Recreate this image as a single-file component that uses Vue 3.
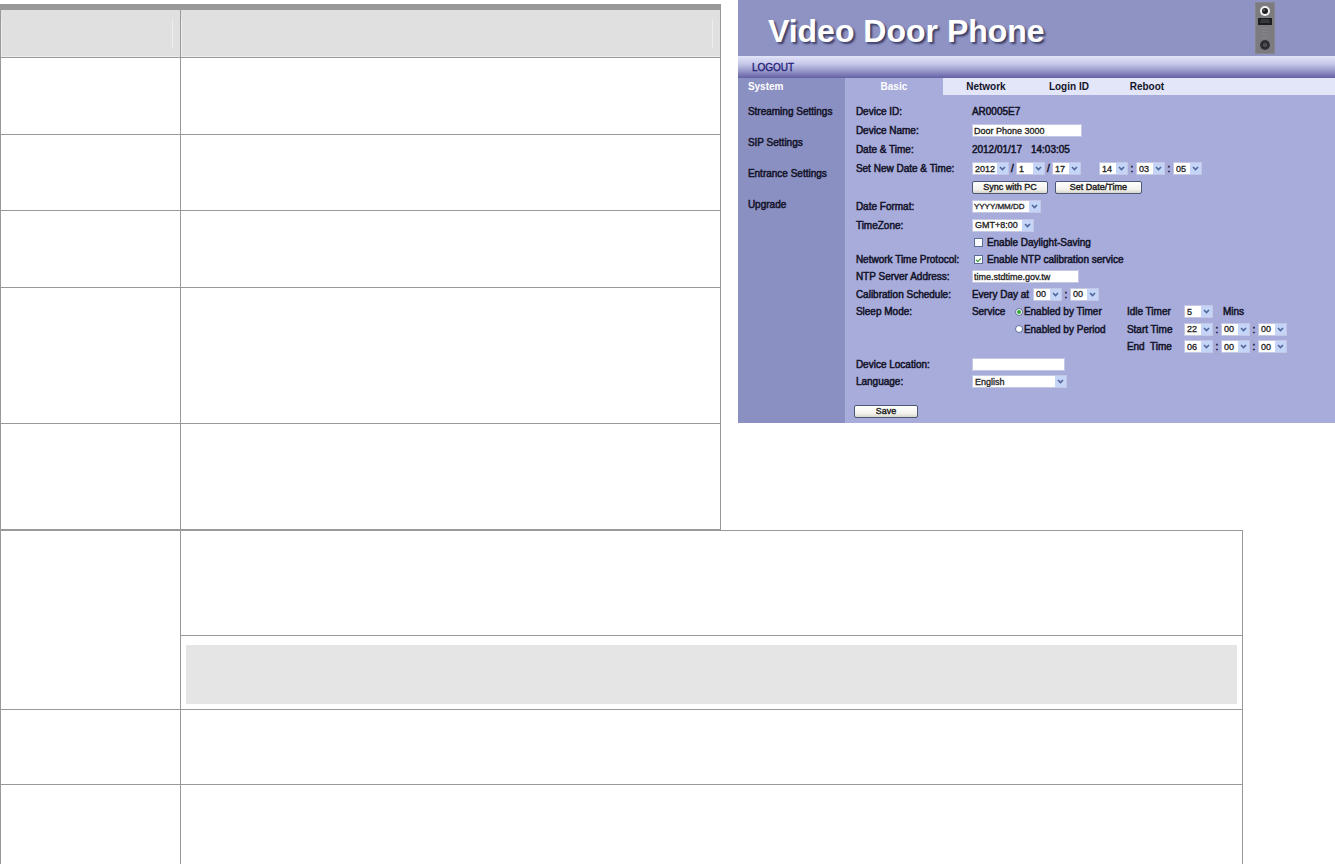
<script setup>
import {ref} from "vue";

const upperRows=[77,76,77,136,106]
const menu=['Streaming Settings','SIP Settings','Entrance Settings','Upgrade']
const tabs=ref([
  {name:'Basic',width:98},
  {name:'Network',width:86},
  {name:'Login ID',width:80},
  {name:'Reboot',width:76},
])
const activeTab=ref('Basic')
const newDate=ref([
  {label:'Year',value:'2012',wide:true,after:'/'},
  {label:'Month',value:'1',after:'/'},
  {label:'Day',value:'17',after:''},
])
const newTime=ref([
  {label:'Hour',value:'14',after:':'},
  {label:'Minute',value:'03',after:':'},
  {label:'Second',value:'05',after:''},
])
const periods=ref({
  start:['22','00','00'],
  end:['06','00','00'],
})
const deviceName=ref('Door Phone 3000')
const ntpServer=ref('time.stdtime.gov.tw')
const deviceLocation=ref('')
const daylight=ref(false)
const ntpEnabled=ref(true)
const sleepMode=ref('timer')
</script>

<template>
  <div class="page">
    <div class="top">
      <table class="grid upper">
        <thead>
          <tr>
            <th class="first"><div class="cellEdge"><div class="cellMark"></div></div></th>
            <th><div class="cellEdge"><div class="cellMark"></div></div></th>
          </tr>
        </thead>
        <tbody>
          <tr v-for="(h,index) in upperRows" :key="index" :style="{height:h+'px'}">
            <td class="first"></td>
            <td></td>
          </tr>
        </tbody>
      </table>

      <div class="phone">
        <header class="banner">
          <h1>Video Door Phone</h1>
          <svg class="device" width="20" height="52" viewBox="0 0 20 52">
            <rect x="0" y="0" width="20" height="52" fill="#85858a"/>
            <rect x="1" y="1" width="18" height="50" fill="#7c7c80"/>
            <circle cx="10" cy="9" r="5" fill="#f4f4f4"/>
            <circle cx="10" cy="9" r="3" fill="#222226"/>
            <circle cx="9" cy="8" r="1" fill="#66666c"/>
            <rect x="3" y="16" width="14" height="7" fill="#1d1e22"/>
            <path d="M6 18h8M5 20h10" stroke="#50525a" stroke-width="1"/>
            <path d="M8 26v12M10 26v12M12 26v12" stroke="#8f8f92" stroke-width="1" stroke-dasharray="1 2"/>
            <circle cx="10" cy="43" r="5" fill="#323338"/>
            <circle cx="10" cy="43" r="3" fill="#4b4c51" stroke="#222226"/>
          </svg>
        </header>
        <div class="logoutBar"><a href="#">LOGOUT</a></div>
        <div class="body">
          <nav class="side">
            <span class="sideTitle">System</span>
            <a v-for="item in menu" :key="item" href="#">{{item}}</a>
          </nav>
          <main class="main">
            <div class="tabs">
              <button v-for="tab in tabs" :key="tab.name" type="button"
                      :class="{active:activeTab===tab.name}"
                      :style="{width:tab.width+'px'}"
                      @click="activeTab=tab.name">{{tab.name}}</button>
            </div>
            <form class="form" @submit.prevent>
              <span>Device ID:</span>
              <div class="line">AR0005E7</div>

              <label for="deviceName">Device Name:</label>
              <div class="line"><input id="deviceName" v-model="deviceName" class="text nameBox" type="text"/></div>

              <span>Date &amp; Time:</span>
              <div class="line dateNow"><span>2012/01/17</span><span>14:03:05</span></div>

              <span>Set New Date &amp; Time:</span>
              <div class="line">
                <template v-for="part in newDate" :key="part.label">
                  <span class="pick" :class="{year:part.wide}">
                    <select v-model="part.value" :aria-label="part.label"><option>{{part.value}}</option></select>
                    <svg viewBox="0 0 11 11"><path d="M3 4l2.5 2.5L8 4" /></svg>
                  </span>
                  <span v-if="part.after" class="mark slash">{{part.after}}</span>
                </template>
                <span class="split"></span>
                <template v-for="part in newTime" :key="part.label">
                  <span class="pick">
                    <select v-model="part.value" :aria-label="part.label"><option>{{part.value}}</option></select>
                    <svg viewBox="0 0 11 11"><path d="M3 4l2.5 2.5L8 4" /></svg>
                  </span>
                  <span v-if="part.after" class="mark">{{part.after}}</span>
                </template>
              </div>

              <span></span>
              <div class="line buttons">
                <button type="button" class="btn sync">Sync with PC</button>
                <button type="button" class="btn set">Set Date/Time</button>
              </div>

              <label for="dateFormat">Date Format:</label>
              <div class="line">
                <span class="pick format">
                  <select id="dateFormat"><option>YYYY/MM/DD</option></select>
                  <svg viewBox="0 0 11 11"><path d="M3 4l2.5 2.5L8 4" /></svg>
                </span>
              </div>

              <label for="timeZone">TimeZone:</label>
              <div class="line">
                <span class="pick zone">
                  <select id="timeZone"><option>GMT+8:00</option></select>
                  <svg viewBox="0 0 11 11"><path d="M3 4l2.5 2.5L8 4" /></svg>
                </span>
              </div>

              <span></span>
              <label class="line check"><input v-model="daylight" type="checkbox"/>Enable Daylight-Saving</label>

              <span>Network Time Protocol:</span>
              <label class="line check"><input v-model="ntpEnabled" type="checkbox"/>Enable NTP calibration service</label>

              <label for="ntpServer">NTP Server Address:</label>
              <div class="line"><input id="ntpServer" v-model="ntpServer" class="text serverBox" type="text"/></div>

              <span>Calibration Schedule:</span>
              <div class="line">
                <span class="every">Every Day at</span>
                <span class="pick">
                  <select aria-label="Calibration hour"><option>00</option></select>
                  <svg viewBox="0 0 11 11"><path d="M3 4l2.5 2.5L8 4" /></svg>
                </span>
                <span class="mark">:</span>
                <span class="pick">
                  <select aria-label="Calibration minute"><option>00</option></select>
                  <svg viewBox="0 0 11 11"><path d="M3 4l2.5 2.5L8 4" /></svg>
                </span>
              </div>

              <span>Sleep Mode:</span>
              <div class="line sleep">
                <span>Service</span>
                <label class="radio"><input v-model="sleepMode" type="radio" name="sleep" value="timer"/>Enabled by Timer</label>
                <label for="idle">Idle Timer</label>
                <div class="line">
                  <span class="pick">
                    <select id="idle"><option>5</option></select>
                    <svg viewBox="0 0 11 11"><path d="M3 4l2.5 2.5L8 4" /></svg>
                  </span>
                  <span class="mins">Mins</span>
                </div>
              </div>

              <span></span>
              <div class="line sleep">
                <span></span>
                <label class="radio"><input v-model="sleepMode" type="radio" name="sleep" value="period"/>Enabled by Period</label>
                <span>Start Time</span>
                <div class="line">
                  <template v-for="(value,i) in periods.start" :key="i">
                    <span v-if="i>0" class="mark">:</span>
                    <span class="pick">
                      <select :aria-label="'Start time '+(i+1)"><option>{{value}}</option></select>
                      <svg viewBox="0 0 11 11"><path d="M3 4l2.5 2.5L8 4" /></svg>
                    </span>
                  </template>
                </div>
              </div>

              <span></span>
              <div class="line sleep">
                <span></span>
                <span></span>
                <span class="endTime">End&nbsp; Time</span>
                <div class="line">
                  <template v-for="(value,i) in periods.end" :key="i">
                    <span v-if="i>0" class="mark">:</span>
                    <span class="pick">
                      <select :aria-label="'End time '+(i+1)"><option>{{value}}</option></select>
                      <svg viewBox="0 0 11 11"><path d="M3 4l2.5 2.5L8 4" /></svg>
                    </span>
                  </template>
                </div>
              </div>

              <label for="location">Device Location:</label>
              <div class="line"><input id="location" v-model="deviceLocation" class="text locationBox" type="text"/></div>

              <label for="language">Language:</label>
              <div class="line">
                <span class="pick language">
                  <select id="language"><option>English</option></select>
                  <svg viewBox="0 0 11 11"><path d="M3 4l2.5 2.5L8 4" /></svg>
                </span>
              </div>
            </form>
            <button type="button" class="btn save">Save</button>
          </main>
        </div>
      </div>
    </div>

    <table class="grid lower">
      <tbody>
        <tr class="h105"><td class="first" rowspan="2"></td><td></td></tr>
        <tr><td class="noteCell"><div class="note"></div></td></tr>
        <tr class="h75"><td class="first"></td><td></td></tr>
        <tr class="h79"><td class="first last"></td><td class="last"></td></tr>
      </tbody>
    </table>
  </div>
</template>

<style>
body{
  margin: 0;
  background-color: white;
}
</style>

<style scoped>
.page{
  padding-top: 4px;
  font-family: "Liberation Sans", Arial, sans-serif;
}
.top{
  display: flex;
  align-items: flex-start;
}
.grid{
  border-collapse: separate;
  border-spacing: 0;
  table-layout: fixed;
}
.grid th,
.grid td{
  box-sizing: border-box;
  padding: 0;
  border-right: 1px solid #999999;
  border-bottom: 1px solid #999999;
  vertical-align: top;
}
.grid .first{
  width: 181px;
  border-left: 1px solid #999999;
}
.grid .last{
  border-bottom: none;
}
.upper{
  width: 54%;
  border-top: 6px solid #999999;
}
.upper th{
  background-color: #e0e0e0;
}
.cellEdge{
  margin-top: 9px;
  height: 37px;
  border-left: 1px solid #eeeeee;
  border-bottom: 1px solid #eeeeee;
}
.cellMark{
  height: 29px;
  margin-right: 7px;
  border-right: 1px solid #eeeeee;
}
.lower{
  width: 93.1%;
  border-top: 1px solid #999999;
}
.h105{
  height: 105px;
}
.h75{
  height: 75px;
}
.h79{
  height: 79px;
}
.grid .noteCell{
  padding: 9px 5px 5px;
}
.note{
  height: 59px;
  background-color: #e5e5e5;
}

.phone{
  flex: 1;
  margin-top: -4px;
  margin-left: 17px;
  font-size: 10px;
  font-weight: bold;
  color: #14142a;
  background-color: #a8acdb;
}
.banner{
  display: flex;
  justify-content: space-between;
  align-items: center;
  height: 56px;
  padding: 0 60px 0 30px;
  background-color: #8f93c4;
}
.banner h1{
  margin: 0;
  padding-top: 6px;
  font-size: 32px;
  line-height: 40px;
  color: white;
  text-shadow: 2px 2px 2px #3c3f66;
}
.logoutBar{
  height: 22px;
  padding-left: 14px;
  line-height: 24px;
  background: linear-gradient(#e2e4f8, #c6c8ea 35%, #9c9ccc 65%, #6460a4);
}
.logoutBar a{
  color: #241c78;
  font-weight: normal;
  text-decoration: none;
  -webkit-text-stroke: 0.3px #241c78;
}
.body{
  display: flex;
}
.side{
  display: flex;
  flex-direction: column;
  box-sizing: border-box;
  width: 107px;
  padding-left: 10px;
  background-color: #8b90c2;
}
.side a{
  height: 31px;
  line-height: 31px;
  font-weight: normal;
  color: #14142a;
  text-decoration: none;
  white-space: nowrap;
  -webkit-text-stroke: 0.5px;
}
.sideTitle{
  height: 18px;
  line-height: 18px;
  color: white;
}
.main{
  flex: 1;
  padding-bottom: 5px;
}
.tabs{
  display: flex;
  height: 17px;
  background-color: #e3e5f9;
}
.tabs button{
  padding: 0;
  border: none;
  background: none;
  font: bold 10px "Liberation Sans", Arial, sans-serif;
  color: #14142a;
}
.tabs .active{
  background-color: #a8acdb;
  color: white;
}
.form{
  display: grid;
  grid-template-columns: 116px 1fr;
  grid-template-rows: repeat(6, 19px) 18px 17px 17px 17px 18px 17px 18px 17px 18px 17px;
  align-items: center;
  padding: 7px 0 0 11px;
  font-weight: normal;
  white-space: nowrap;
  -webkit-text-stroke: 0.5px;
}
.line{
  display: flex;
  align-items: center;
}
.dateNow{
  gap: 9px;
}
.text{
  box-sizing: border-box;
  height: 13px;
  padding: 0 1px;
  border: 1px solid #c4c8e4;
  background-color: white;
  font: 9px "Liberation Sans", Arial, sans-serif;
  color: #222222;
  -webkit-text-stroke: 0.3px;
}
.nameBox{
  width: 110px;
}
.serverBox{
  width: 107px;
}
.locationBox{
  width: 93px;
}
.pick{
  position: relative;
  display: block;
  width: 29px;
  height: 13px;
}
.pick select{
  display: block;
  box-sizing: border-box;
  width: 100%;
  height: 13px;
  padding: 0 2px;
  border: 1px solid #c4c8e4;
  border-radius: 0;
  appearance: none;
  background-color: white;
  font: 9px "Liberation Sans", Arial, sans-serif;
  color: #222222;
  -webkit-text-stroke: 0.3px;
}
.pick svg{
  position: absolute;
  top: 1px;
  right: 1px;
  width: 11px;
  height: 11px;
  background-color: #c5d5f8;
  pointer-events: none;
}
.pick path{
  fill: none;
  stroke: #4f659a;
  stroke-width: 1.6;
}
.year{
  width: 37px;
}
.format{
  width: 69px;
}
.format select{
  padding: 0 1px;
  font-size: 8px;
}
.zone{
  width: 62px;
}
.language{
  width: 95px;
}
.every{
  width: 61px;
}
.mark{
  width: 8px;
  text-align: center;
}
.slash{
  width: 7px;
}
.split{
  width: 18px;
}
.buttons{
  gap: 7px;
}
.btn{
  box-sizing: border-box;
  height: 13px;
  padding: 0;
  border: 1px solid #4a5878;
  border-radius: 2px;
  background: linear-gradient(#ffffff, #f2f1ec 70%, #d8d4c8);
  font: 9px/11px "Liberation Sans", Arial, sans-serif;
  color: #222222;
  -webkit-text-stroke: 0.4px;
}
.sync{
  width: 76px;
}
.set{
  width: 87px;
}
.save{
  display: block;
  width: 64px;
  margin: 15px 0 0 9px;
}
.check input,
.radio input{
  display: grid;
  place-content: center;
  box-sizing: border-box;
  width: 9px;
  height: 9px;
  margin: 0 4px 0 2px;
  border: 1px solid #5a6e9a;
  appearance: none;
  background-color: white;
}
.check input:checked::before{
  content: "";
  width: 4px;
  height: 2px;
  margin-bottom: 1px;
  border-left: 1px solid #2a9a2a;
  border-bottom: 1px solid #2a9a2a;
  transform: rotate(-45deg);
}
.sleep{
  display: grid;
  grid-template-columns: 43px 112px 57px auto;
  justify-content: start;
}
.radio{
  display: flex;
  align-items: center;
}
.radio input{
  width: 8px;
  height: 8px;
  margin: 0 1px 0 0;
  border-radius: 50%;
}
.radio input:checked::before{
  content: "";
  width: 4px;
  height: 4px;
  border-radius: 50%;
  background-color: #35a535;
}
.mins{
  margin-left: 10px;
}
</style>
